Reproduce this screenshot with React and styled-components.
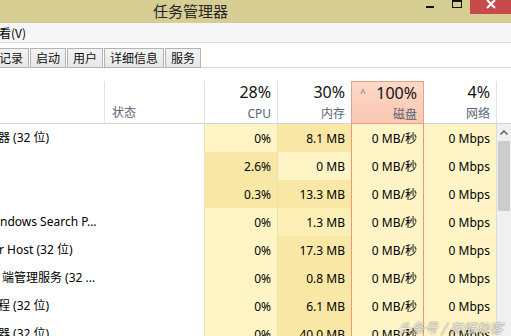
import React from "react"
import styled, { createGlobalStyle } from "styled-components"

const GlobalStyle = createGlobalStyle`
  body {
    margin: 0;
    background: #fff;
    font-family: "Noto Sans", "Noto Sans CJK SC", sans-serif;
    color: #000;
  }
  #root {
    width: 511px;
    height: 336px;
    overflow: hidden;
  }
`

const Window = styled.div`
  position: relative;
  width: 511px;
  height: 336px;
  overflow: hidden;
  background: #fff;
`

const TitleBar = styled.div`
  display: flex;
  align-items: flex-start;
  height: 23px;
  background: #d6ce93;
`

const Title = styled.div`
  flex: 1;
  padding-left: 153px;
  font-family: "Noto Sans CJK SC", sans-serif;
  font-size: 15px;
  line-height: 21px;
  color: #262626;
`

const Controls = styled.div`
  display: flex;
`

const CtrlButton = styled.div`
  display: flex;
  justify-content: center;
  align-items: flex-start;
  width: ${(p) => p.$w}px;
  height: 14px;
  background: ${(p) => (p.$close ? "#c84a4b" : "transparent")};
`

const MenuBar = styled.div`
  height: 19px;
  line-height: 19px;
  background: #f5f6f7;
  border-bottom: 1px solid #dcdee2;
  font-family: "Noto Sans CJK SC", sans-serif;
  font-size: 12px;
  text-indent: -1px;
`

const TabStrip = styled.div`
  display: flex;
  gap: 1px;
  margin-top: 5px;
  height: 19px;
  border-bottom: 1px solid #d6d6d6;
`

const Tab = styled.div`
  box-sizing: border-box;
  height: 20px;
  padding: 0 5px;
  margin-left: ${(p) => (p.$first ? "-7px" : "0")};
  border: 1px solid #b3b3b3;
  background: linear-gradient(#f3f3f3, #e7e7e7);
  font-family: "Noto Sans CJK SC", sans-serif;
  font-size: 12px;
  line-height: 18px;
  color: #111;
`

const COLS = "105px 100px 73px 73px 73px 73px 14px"

const HeaderRow = styled.div`
  display: grid;
  grid-template-columns: ${COLS};
  padding-top: 13px;
`

const HeadCell = styled.div`
  box-sizing: border-box;
  height: 43px;
  padding: 1px 6px 0 7px;
  display: flex;
  flex-direction: column;
  align-items: ${(p) => (p.$left ? "flex-start" : "flex-end")};
  justify-content: ${(p) => (p.$left ? "flex-end" : "flex-start")};
  border-right: ${(p) => (p.$noSep ? "none" : "1px solid #e2e2e2")};
  border-bottom: 1px solid #d4d4d4;
  position: relative;
  ${(p) =>
    p.$active &&
    `
    border: 1px solid #e2a189;
    background: linear-gradient(#fdd8c8, #fbc7b1);
  `}
`

const Percent = styled.div`
  font-size: 16px;
  line-height: 20px;
  color: #111;
`

const Label = styled.div`
  font-family: "Noto Sans", "Noto Sans CJK SC", sans-serif;
  font-size: 12px;
  line-height: 16px;
  margin-top: ${(p) => (p.$left ? "0" : "4px")};
  padding-bottom: ${(p) => (p.$left ? "2px" : "0")};
  color: #55647a;
`

const SortCaret = styled.span`
  position: absolute;
  left: 8px;
  top: 6px;
  font-size: 10px;
  line-height: 10px;
  color: #7a7a7a;
`

const Body = styled.div`
  display: flex;
`

const Rows = styled.div`
  display: flex;
  flex-direction: column;
  width: 497px;
`

const Row = styled.div`
  display: grid;
  grid-template-columns: 105px 100px 73px 73px 73px 73px;
  height: 28px;
`

const NameCell = styled.div`
  overflow: hidden;
  white-space: nowrap;
  font-size: 12px;
  line-height: 28px;
  text-indent: ${(p) => p.$shift || 0}px;
  background: #fff;
`

const StatusCell = styled.div`
  background: #fff;
  border-right: 1px solid #eee3bc;
`

const HEAT = ["#fff4c5", "#fcefb5", "#f9e8a5"]

const DataCell = styled.div`
  box-sizing: border-box;
  padding-right: 6px;
  text-align: right;
  font-size: 12px;
  line-height: 29px;
  white-space: nowrap;
  background: ${(p) => HEAT[p.$heat || 0]};
  border-left: ${(p) => (p.$disk ? "1px solid #e39b7e" : "none")};
  border-right: ${(p) =>
    p.$disk ? "1px solid #e39b7e" : p.$edge ? `1px solid ${p.$edge}` : "none"};
`

const ScrollBar = styled.div`
  display: flex;
  flex-direction: column;
  width: 14px;
  height: 230px;
  background: #f0f0f0;
`

const ScrollArrow = styled.div`
  display: flex;
  justify-content: center;
  align-items: center;
  height: 17px;
`

const Thumb = styled.div`
  height: 70px;
  margin: 0 1px;
  background: #cdcdcd;
`

const Watermark = styled.div`
  position: absolute;
  right: 8px;
  bottom: 0;
  font-family: "Noto Sans CJK SC", sans-serif;
  font-size: 13px;
  line-height: 16px;
  font-style: italic;
  color: rgba(255, 255, 255, 0.9);
  text-shadow: 0 0 1px rgba(0, 0, 0, 0.55), 0 0 2px rgba(0, 0, 0, 0.25);
  letter-spacing: 0.3px;
`

const rows = [
  { name: "器 (32 位)", shift: -2, cpu: "0%", cpuHeat: 0, mem: "8.1 MB", memHeat: 2 },
  { name: "", cpu: "2.6%", cpuHeat: 2, mem: "0 MB", memHeat: 0 },
  { name: "", cpu: "0.3%", cpuHeat: 2, mem: "13.3 MB", memHeat: 2 },
  { name: "ndows Search P...", shift: 0, cpu: "0%", cpuHeat: 0, mem: "1.3 MB", memHeat: 1 },
  { name: "r Host (32 位)", shift: -1, cpu: "0%", cpuHeat: 0, mem: "17.3 MB", memHeat: 2 },
  { name: "端管理服务 (32 ...", shift: 2, cpu: "0%", cpuHeat: 0, mem: "0.8 MB", memHeat: 2 },
  { name: "程 (32 位)", shift: -2, cpu: "0%", cpuHeat: 0, mem: "6.1 MB", memHeat: 2 },
  { name: "器 (32 位)", shift: -2, cpu: "0%", cpuHeat: 0, mem: "40.0 MB", memHeat: 2 },
]

const tabs = ["记录", "启动", "用户", "详细信息", "服务"]

export default function App() {
  return (
    <Window>
      <GlobalStyle />
      <TitleBar>
        <Title>任务管理器</Title>
        <Controls>
          <CtrlButton $w={26}>
            <svg width="8" height="9" viewBox="0 0 8 9">
              <rect x="0" y="6" width="8" height="2" fill="#111" />
            </svg>
          </CtrlButton>
          <CtrlButton $w={27}>
            <svg width="10" height="8" viewBox="0 0 10 8">
              <rect x="0.5" y="0.5" width="9" height="7" fill="none" stroke="#111" />
              <rect x="0" y="0" width="10" height="2" fill="#111" />
            </svg>
          </CtrlButton>
          <CtrlButton $w={41} $close>
            <svg width="10" height="10" viewBox="0 0 10 10">
              <path d="M1 0 L9 8 M9 0 L1 8" stroke="#fff" strokeWidth="2" />
            </svg>
          </CtrlButton>
        </Controls>
      </TitleBar>
      <MenuBar>看(V)</MenuBar>
      <TabStrip>
        {tabs.map((t, i) => (
          <Tab key={t} $first={i === 0}>
            {t}
          </Tab>
        ))}
      </TabStrip>
      <HeaderRow>
        <HeadCell />
        <HeadCell $left>
          <Label $left>状态</Label>
        </HeadCell>
        <HeadCell>
          <Percent>28%</Percent>
          <Label>CPU</Label>
        </HeadCell>
        <HeadCell $noSep>
          <Percent>30%</Percent>
          <Label>内存</Label>
        </HeadCell>
        <HeadCell $active>
          <SortCaret>^</SortCaret>
          <Percent>100%</Percent>
          <Label>磁盘</Label>
        </HeadCell>
        <HeadCell>
          <Percent>4%</Percent>
          <Label>网络</Label>
        </HeadCell>
        <HeadCell $noSep />
      </HeaderRow>
      <Body>
        <Rows>
          {rows.map((r, i) => (
            <Row key={i}>
              <NameCell $shift={r.shift}>{r.name}</NameCell>
              <StatusCell />
              <DataCell $heat={r.cpuHeat} $edge="#eadfae">
                {r.cpu}
              </DataCell>
              <DataCell $heat={r.memHeat}>{r.mem}</DataCell>
              <DataCell $disk>0 MB/秒</DataCell>
              <DataCell $edge="#dcdcdc">0 Mbps</DataCell>
            </Row>
          ))}
        </Rows>
        <ScrollBar>
          <ScrollArrow>
            <svg width="8" height="5" viewBox="0 0 8 5">
              <path d="M0.5 4.5 L4 1 L7.5 4.5" fill="none" stroke="#555" strokeWidth="1.4" />
            </svg>
          </ScrollArrow>
          <Thumb />
        </ScrollBar>
      </Body>
      <Watermark>头条号 / 存储极客</Watermark>
    </Window>
  )
}
